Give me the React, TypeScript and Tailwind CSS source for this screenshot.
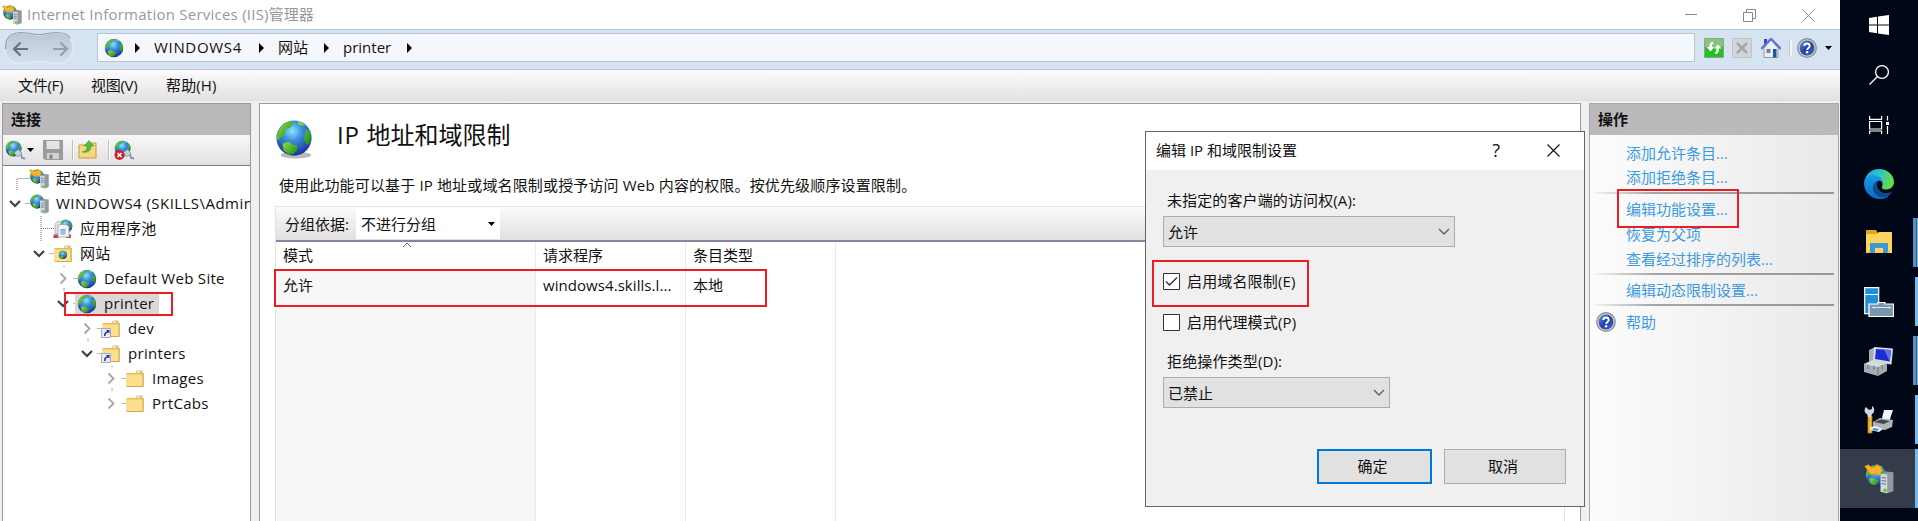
import type { ReactNode } from 'react';

const GlobeShapes = () => (
  <>
    <defs>
      <radialGradient id="sea" cx="45%" cy="30%" r="70%">
        <stop offset="0" stopColor="#8fe3fa" />
        <stop offset="0.4" stopColor="#3a8fdc" />
        <stop offset="1" stopColor="#1c2fa0" />
      </radialGradient>
      <linearGradient id="land" x1="0" y1="0" x2="1" y2="1">
        <stop offset="0" stopColor="#9be03c" />
        <stop offset="1" stopColor="#128a1e" />
      </linearGradient>
    </defs>
    <circle cx="20" cy="20" r="18.5" fill="url(#sea)" />
    <path d="M3 14C6 7 11 3 17 2l2 3-3 4-5 2-1 5-4 4-3 3-1-3z" fill="url(#land)" />
    <path d="M24 2l5 2 3 3-3 0-4-1zM33 11l3 1 2 6-1 7-3 2-3-4 0-6z" fill="url(#land)" />
    <path d="M8 26l6-2 5 3 5 1-1 5-4 4-5 0-5-4z" fill="url(#land)" />
  </>
);

const Globe = ({ className }: { className: string }) => (
  <svg viewBox="0 0 40 40" className={className}>
    <GlobeShapes />
  </svg>
);

const Tower = () => (
  <>
    <path d="M23 13l7-3 9 1v25l-8 3-8-2z" fill="#8d949b" />
    <path d="M31 14l8-3v25l-8 3z" fill="#9299a0" />
    <path d="M22 13l9 1v25l-9-2z" fill="#d3d8db" />
    <path d="M23.500 18l6 1M23.500 22l6 1M23.500 26l6 1" stroke="#6a7279" strokeWidth="1.6" />
    <circle cx="28" cy="35" r="2.400" fill="#4fd21c" />
  </>
);

const ServerGlobe = ({ className, arrow }: { className: string; arrow?: boolean }) => (
  <svg viewBox="0 0 40 40" className={className}>
    <g transform="translate(1 0) scale(.76)">
      <GlobeShapes />
    </g>
    {arrow && (
      <path d="M1 3l5-2 4 4 6-2 1-3 8 8-5 8-4-3-7 1z" fill="#fbb52a" stroke="#d98a10" strokeWidth="1" />
    )}
    <Tower />
  </svg>
);

const Folder = ({ kind }: { kind?: 'web' | 'link' }) => (
  <svg viewBox="0 0 20 20" className="size-5 shrink-0">
    <path d="M1.5 4h9l1.5-2.5h6V17.500h-16.500z" fill="#e9bd5c" />
    <path d="M13 2h4.500v2h-5.500z" fill="#fff5d2" />
    <path d="M14.500 2.500h2.500v1h-3z" fill="#58a6dc" />
    <path d="M1.800 5.500h15.700v11.700H1.800z" fill="#fbdf8b" />
    <path d="M1.800 17.500h16.500V4" fill="none" stroke="#cf9f45" strokeWidth=".9" />
    {kind === 'web' && (
      <g transform="translate(5.500 6.500) scale(.22)">
        <GlobeShapes />
      </g>
    )}
    {kind === 'link' && (
      <>
        <path d="M.5 9.500h9v9h-9z" fill="#e8eaf6" stroke="#a5a8bc" />
        <path d="M3 17c0-3 1-4 3-4.500l-1-1.500h3.500v3.500l-1.300-1C5 14 4.500 15 4.500 17z" fill="#24309a" />
      </>
    )}
  </svg>
);

const AppPool = () => (
  <svg viewBox="0 0 20 20" className="size-5 shrink-0">
    <g transform="translate(5.500 0) scale(.36)">
      <GlobeShapes />
    </g>
    <path d="M2 5l3-3 3 1v12H2z" fill="#dfe2e4" stroke="#a1a6aa" strokeWidth=".7" />
    <path d="M.5 15.500h5V19h-5zM13 15.500h5V19h-5z" fill="#c4463c" />
    <path d="M5 7l1-1.500h7l3 2V18H5z" fill="#f1f4f7" stroke="#929aa2" strokeWidth=".7" />
    <path d="M7.500 10h5v5.500h-5z" fill="#7aa5d0" />
    <path d="M7.500 12h5M7.500 14h5" stroke="#fff" strokeWidth=".6" />
  </svg>
);

const GlobePlug = ({ error }: { error?: boolean }) => (
  <svg viewBox="0 0 20 20" className="size-5 shrink-0">
    <path d="M12 13l4 1 1 4 3 .5" stroke="#7e97a5" strokeWidth="1.800" fill="none" />
    <g transform="scale(.43)">
      <GlobeShapes />
    </g>
    <path d="M9.500 12l4-2.500 3.500 3.500-3 3.500-3.500-1z" fill="#c3d2da" stroke="#718995" strokeWidth=".6" />
    {error && (
      <>
        <circle cx="5.500" cy="15" r="5" fill="#d0222c" />
        <path d="M3.500 13l4 4m0-4l-4 4" stroke="#fff" strokeWidth="1.600" />
      </>
    )}
  </svg>
);

const Help = () => (
  <svg viewBox="0 0 20 20" className="size-5 shrink-0">
    <defs>
      <linearGradient id="hb" x1="0" y1="0" x2="1" y2="1">
        <stop offset="0" stopColor="#6a8fe0" />
        <stop offset=".5" stopColor="#2243a6" />
        <stop offset="1" stopColor="#3c63cc" />
      </linearGradient>
    </defs>
    <circle cx="10" cy="10" r="9.300" fill="#c9c9c9" stroke="#8b8b8b" strokeWidth="1.200" />
    <circle cx="10" cy="10" r="7.400" fill="url(#hb)" />
    <path d="M7.300 8c0-3.300 5.400-3.300 5.400 0 0 1.900-2.600 1.900-2.600 4" fill="none" stroke="#fff" strokeWidth="1.900" />
    <circle cx="10.100" cy="14.200" r="1.200" fill="#fff" />
  </svg>
);

const Right = () => (
  <svg viewBox="0 0 5 10" className="h-2.5 w-[5px] shrink-0">
    <path d="M0 0l5 5-5 5z" fill="#000" />
  </svg>
);

const Down = () => (
  <svg viewBox="0 0 7 4" className="h-1 w-[7px] shrink-0">
    <path d="M0 0h7L3.500 4z" fill="#000" />
  </svg>
);

const ToolSep = () => <div className="h-5 w-0.5 shrink-0 border-l border-[#c5c0a8] bg-white" />;

type Node = {
  depth: number;
  label: string;
  icon: ReactNode;
  state?: 'open' | 'closed';
  line?: string;
  selected?: boolean;
};

const tree: Node[] = [
  { depth: 0, label: '起始页', icon: <ServerGlobe arrow className="size-5 shrink-0" />, line: 'M14.500 26V12.500H28' },
  { depth: 0, label: 'WINDOWS4 (SKILLS\\Admin', icon: <ServerGlobe className="size-5 shrink-0" />, state: 'open', line: 'M23 12.500H28' },
  { depth: 1, label: '应用程序池', icon: <AppPool />, line: 'M14.500 0V25M14.500 12.500H28' },
  { depth: 1, label: '网站', icon: <Folder kind="web" />, state: 'open', line: 'M23 12.500H28' },
  { depth: 2, label: 'Default Web Site', icon: <Globe className="size-5 shrink-0" />, state: 'closed', line: 'M23 12.500H28M13.500 0V2M13.500 22V25' },
  { depth: 2, label: 'printer', icon: <Globe className="size-5 shrink-0" />, state: 'open', line: 'M23 12.500H28', selected: true },
  { depth: 3, label: 'dev', icon: <Folder kind="link" />, state: 'closed', line: 'M23 12.500H28M13.500 0V2M13.500 22V25' },
  { depth: 3, label: 'printers', icon: <Folder kind="link" />, state: 'open', line: 'M23 12.500H28' },
  { depth: 4, label: 'Images', icon: <Folder />, state: 'closed', line: 'M23 12.500H28M13.500 0V2M13.500 22V25' },
  { depth: 4, label: 'PrtCabs', icon: <Folder />, state: 'closed', line: 'M23 12.500H28' },
];

const TreeRow = ({ n }: { n: Node }) => (
  <div className="flex h-[25px] items-center" style={{ paddingLeft: n.depth * 24 }}>
    <svg viewBox="0 0 27 25" className="-mr-px -ml-px h-[25px] w-[28px] shrink-0">
      <path d={n.line} fill="none" stroke="#777" strokeWidth="1" strokeDasharray="1 1" />
      {n.state === 'open' && <path d="M7.500 10l5 5 5-5" fill="none" stroke="#404040" strokeWidth="2.200" />}
      {n.state === 'closed' && <path d="M10 7.500l5 5-5 5" fill="none" stroke="#a6a6a6" strokeWidth="1.800" />}
    </svg>
    <div className={n.selected ? '-ml-0.5 flex h-[22px] items-center bg-[#d9d9d9] pr-[5px] pl-0.5' : 'flex items-center'}>
      {n.icon}
      <span className={n.depth === 0 && n.state ? 'pb-px pl-[7px] tracking-[0.030em]' : 'pb-px pl-[7px] tracking-[0.020em]'}>{n.label}</span>
    </div>
  </div>
);

const Chevron = () => (
  <svg viewBox="0 0 12 8" className="h-2 w-3">
    <path d="M1 1l5 5 5-5" fill="none" stroke="#606060" strokeWidth="1.400" />
  </svg>
);

const ActionSep = () => <div className="mr-1 ml-1 h-0.5 shrink-0 bg-linear-to-r from-[#f4f4f4] via-[#a5a5a5] via-25% to-[#979797]" />;

const Action = ({ children, h = 'h-[25px]' }: { children: ReactNode; h?: string }) => (
  <div className={'flex shrink-0 items-center pl-9 text-[#3d9bdb] ' + h}>{children}</div>
);

const TaskItem = ({ children, bar, active }: { children: ReactNode; bar?: 'one' | 'two'; active?: boolean }) => (
  <div className={'relative flex h-[59px] shrink-0 items-center justify-center ' + (active ? 'bg-[#343b49]' : '')}>
    {children}
    {bar === 'one' && <div className={'absolute right-0 w-[3px] bg-[#76b9ed] ' + (active ? 'inset-y-0' : 'inset-y-[5px]')} />}
    {bar === 'two' && (
      <div className="absolute inset-y-[5px] right-0 w-[5px] border-r border-[#76b9ed] bg-[#5b92bd]">
        <div className="ml-[3px] h-full w-px bg-[#38607f]" />
      </div>
    )}
  </div>
);

const red = 'pointer-events-none absolute border-2 border-[#ed1c24] ';

export default function App() {
  return (
    <div className="relative flex h-[521px] w-[1918px] overflow-hidden bg-[#f0f0f0] font-['Open_Sans','Noto_Sans_CJK_SC',sans-serif] text-[15px] leading-5 whitespace-nowrap text-[#111]">
      <div className="flex w-[1840px] shrink-0 flex-col">
        <header className="flex h-[29px] shrink-0 items-center bg-white pl-0.5 text-[#999]">
          <ServerGlobe arrow className="size-5" />
          <span className="pb-px pl-[5px]">
            <span className="tracking-[0.016em]">Internet Information Services (IIS)</span>管理器
          </span>
          <svg viewBox="0 0 130 14" className="mr-[25px] ml-auto h-3.5 w-[130px]" fill="none" stroke="#888">
            <path d="M0 6.500h12M58.500 4.500h9v9h-9zM61.500 4.500v-3h9v9h-3M117.500 1.500l12 12m0-12l-12 12" />
          </svg>
        </header>

        <div className="flex h-[41px] shrink-0 items-center border-y border-[#b7c6d5] bg-[#d6e4f1]">
          <svg viewBox="0 0 74 38" className="mr-[23px] h-[38px] w-[74px] shrink-0">
            <defs>
              <linearGradient id="nav" x1="0" y1="0" x2="0" y2="1">
                <stop offset="0" stopColor="#b8c6d6" />
                <stop offset="1" stopColor="#d3e0ee" />
              </linearGradient>
            </defs>
            <path d="M20 1.500C30 1.500 31 4 39 4s9-2.500 18-2.500c21 0 21 31 0 31-9 0-10-2-18-2s-9 2-19 2c-20 0-20-31 0-31z" fill="url(#nav)" stroke="#e0eaf4" strokeWidth="1.500" />
            <path d="M5.500 18C5 7 11 2 20 1.500 30 1.500 31 3.500 39 3.500s9-2 18-2c6 0 11 2 13 6" fill="none" stroke="#98a2ad" strokeWidth="1.200" />
            <path d="M28 18H14m6.500-6.500L14 18l6.500 6.500" fill="none" stroke="#707070" strokeWidth="2.200" />
            <path d="M53 18h14m-6.500-6.500L67 18l-6.500 6.500" fill="none" stroke="#9a9fa5" strokeWidth="2.200" />
          </svg>
          <div className="mb-1 flex h-[29px] w-[1598px] shrink-0 items-center border border-[#b5c5d6] bg-[#f4f8fd] pl-[7px]">
            <Globe className="-ml-px size-5" />
            <div className="flex items-center pl-[11px]">
              <Right />
              <span className="w-[119px] pb-px pl-3.5 tracking-[0.045em]">WINDOWS4</span>
              <Right />
              <span className="w-[60px] pb-px pl-3.5">网站</span>
              <Right />
              <span className="w-[78px] pb-px pl-3.5">printer</span>
              <Right />
            </div>
          </div>
          <div className="mb-1 ml-[9px] flex items-center">
            <svg viewBox="0 0 20 20" className="mr-2 size-5">
              <path d="M.5.500h19v19H.5z" fill="#25c021" stroke="#8da58d" />
              <path d="M1 1h18v8H1z" fill="#86c57e" />
              <path d="M9 4C6 4 5.500 6 5.500 9H2.500l4 4.500L10.500 9H8c0-2 0-3 1.500-3.500zM11 16c3 0 4-2 4-5.500h2.500L14 6.500 10 10.500h2.500c0 2 0 3-1.500 3.500z" fill="#fff" />
            </svg>
            <svg viewBox="0 0 20 20" className="mr-[9px] size-5">
              <path d="M.5.500h19v19H.5z" fill="#d3d6d9" stroke="#bcc3ca" />
              <path d="M5 5l10 10m0-10L5 15" stroke="#a5a9ad" strokeWidth="2.600" />
            </svg>
            <svg viewBox="0 0 20 20" className="mr-[9px] size-5">
              <path d="M3 1h3v6H3z" fill="#3d47c4" />
              <path d="M3 10l7-8 7 8v9.500H3z" fill="#eceff4" stroke="#8e97ad" />
              <path d="M0 11L10 .8 20 11" fill="none" stroke="#6270cd" strokeWidth="2.200" />
              <path d="M5.500 11h4v4h-4z" fill="#777f8d" />
              <path d="M12 11h3.500v8.500H12z" fill="#155a9e" />
            </svg>
            <div className="mr-[5px] h-4 w-0.5 bg-[#f4f4f4] shadow-[-1px_0_0_#c6c9cc]" />
            <Help />
            <div className="pl-2">
              <Down />
            </div>
          </div>
        </div>

        <nav className="flex h-[31px] shrink-0 items-center gap-[25px] border-b border-[#dedcdd] bg-linear-to-b from-[#fcfcfc] to-[#e4e1e2] pl-[18px]">
          <span className="w-12 tracking-[-0.020em]">文件(F)</span>
          <span className="w-[50px] tracking-[-0.020em]">视图(V)</span>
          <span className="tracking-[0.010em]">帮助(H)</span>
        </nav>

        <main className="flex min-h-0 grow pt-0.5 pl-0.5">
          <aside className="flex w-[249px] shrink-0 flex-col overflow-hidden border-x border-t border-[#9a9a9a] bg-white">
            <div className="flex h-[31px] shrink-0 items-center bg-[#bbb9bb] pb-px pl-2 font-bold">连接</div>
            <div className="flex h-[31px] shrink-0 items-center border-b border-[#7b7b9b] bg-linear-to-b from-[#f9f8f9] to-[#e1dfe0] pl-0.5">
              <GlobePlug />
              <div className="pr-[9px] pl-0.5">
                <Down />
              </div>
              <svg viewBox="0 0 20 20" className="mr-[9px] size-5 shrink-0">
                <path d="M0 0h20v20H2l-2-2z" fill="#9b9b9b" />
                <path d="M3.500 1h13v8h-13z" fill="#e3e3e3" />
                <path d="M4 13h12v6H4z" fill="#d2d2d2" />
                <path d="M6.500 14.500h3V19h-3z" fill="#888" />
              </svg>
              <ToolSep />
              <svg viewBox="0 0 20 20" className="mx-1 size-5 shrink-0">
                <path d="M1 5h10l1-2h6v15H1z" fill="#f7d680" stroke="#c79a3f" />
                <path d="M4 12c5-1 5-4 5-6H6l5-5.500L16 6h-3c0 5-3 7-9 6z" fill="#4fbf3a" stroke="#2d9426" strokeWidth=".5" />
              </svg>
              <div className="pr-1 pl-1.5">
                <ToolSep />
              </div>
              <GlobePlug error />
            </div>
            <div className="flex flex-col">
              {tree.map((n) => (
                <TreeRow key={n.label} n={n} />
              ))}
            </div>
          </aside>

          <section className="ml-2 flex w-[1322px] shrink-0 flex-col border-x border-t border-[#9a9a9a] bg-white pl-[15px]">
            <div className="flex h-[67px] shrink-0 items-center pt-1.5">
              <svg viewBox="0 0 40 42" className="mb-1 h-10 w-[38px]">
                <ellipse cx="22" cy="38" rx="16" ry="3.500" fill="#b9b9b9" />
                <GlobeShapes />
              </svg>
              <h1 className="mb-[11px] pl-6 text-[24px] leading-8">
                <span className="tracking-[0.030em]">IP </span>地址和域限制
              </h1>
            </div>
            <p className="h-[35px] shrink-0 pt-1 pl-1 tracking-[0.010em]">
              使用此功能可以基于 IP 地址或域名限制或授予访问 Web 内容的权限。按优先级顺序设置限制。
            </p>
            <div className="mr-[15px] flex min-h-0 grow flex-col border-x border-t border-[#e3e3e3]">
              <div className="flex h-[35px] shrink-0 items-center border-b-2 border-[#8585a4] bg-linear-to-b from-[#fbfafb] to-[#e1dfe0] pl-[9px]">
                <span className="w-[71px]">分组依据:</span>
                <div className="flex h-[31px] w-36 items-center justify-between bg-white pr-[5px] pl-[5px]">
                  <span>不进行分组</span>
                  <Down />
                </div>
              </div>
              <div className="grid min-h-0 grow grid-cols-[260px_150px_150px_1fr]">
                <div className="relative flex flex-col border-r border-[#e1eefa]">
                  <svg viewBox="0 0 10 6" className="absolute top-0 left-[126px] h-1.5 w-2.5">
                    <path d="M1 5l4-4 4 4" fill="none" stroke="#666" />
                  </svg>
                  <div className="flex h-[27px] shrink-0 items-center pb-0.5 pl-[7px]">模式</div>
                  <div className="grow bg-[#f7f7f7] pt-1.5 pl-[7px]">允许</div>
                </div>
                <div className="border-r border-[#e1eefa] pl-[7px]">
                  <div className="flex h-[27px] items-center pb-0.5">请求程序</div>
                  <div className="pt-1.5 tracking-[0.004em]">windows4.skills.l...</div>
                </div>
                <div className="border-r border-[#e1eefa] pl-[7px]">
                  <div className="flex h-[27px] items-center pb-0.5">条目类型</div>
                  <div className="pt-1.5">本地</div>
                </div>
              </div>
            </div>
          </section>

          <aside className="ml-2 flex w-[250px] shrink-0 flex-col border-x border-t border-[#a8a8a8] bg-linear-to-r from-[#fcfcfc] to-[#e9e9e9]">
            <div className="flex h-[31px] shrink-0 items-center bg-[#bbb9bb] pb-px pl-2 font-bold">操作</div>
            <div className="h-[5px] shrink-0" />
            <Action>添加允许条目...</Action>
            <Action h="h-[27px] pb-[3px]">添加拒绝条目...</Action>
            <ActionSep />
            <Action h="h-[29px]">编辑功能设置...</Action>
            <Action h="h-[24px] pb-0.5">恢复为父项</Action>
            <Action h="h-[26px] pb-0.5">查看经过排序的列表...</Action>
            <ActionSep />
            <Action h="h-[29px]">编辑动态限制设置...</Action>
            <ActionSep />
            <div className="flex h-[30px] items-center gap-2.5 pt-px pl-1.5 text-[#3d9bdb]">
              <Help />
              帮助
            </div>
          </aside>
        </main>
      </div>

      <div className="flex w-[78px] shrink-0 flex-col bg-[#000818]">
        <div className="flex h-[50px] shrink-0 items-center justify-center">
          <svg viewBox="0 0 20 20" className="size-5" fill="#fff">
            <path d="M0 3l8-1.200v7.700H0zM9 1.600L20 0v9.500H9zM0 10.500h8v7.700L0 17zM9 10.500h11V20L9 18.400z" />
          </svg>
        </div>
        <div className="flex h-[50px] shrink-0 items-center justify-center">
          <svg viewBox="0 0 20 20" className="size-5" fill="none" stroke="#fff" strokeWidth="1.300">
            <circle cx="13" cy="7" r="6.400" />
            <path d="M8.500 11.500L.5 19.500" />
          </svg>
        </div>
        <div className="flex h-[49px] shrink-0 items-center justify-center">
          <svg viewBox="0 0 20 20" className="size-5" fill="none" stroke="#fff" strokeWidth="1.200">
            <path d="M.6 1v3.400h12V1M.6 19v-3h12v3M.6 6.500h12v7.500H.6zM18.500 1v4.500M18.500 11v8" />
            <path d="M17 7h3v3h-3z" fill="#fff" stroke="none" />
          </svg>
        </div>
        <div className="h-[5px] shrink-0" />
        <TaskItem>
          <svg viewBox="0 0 30 30" className="size-[30px]">
            <defs>
              <linearGradient id="e1" x1="0" y1="0" x2="1" y2=".3">
                <stop offset="0" stopColor="#1aa0e0" />
                <stop offset=".5" stopColor="#2bc3d2" />
                <stop offset="1" stopColor="#63dc4a" />
              </linearGradient>
              <linearGradient id="e2" x1="0" y1="0" x2="0" y2="1">
                <stop offset="0" stopColor="#1b9de2" />
                <stop offset="1" stopColor="#0a66c8" />
              </linearGradient>
            </defs>
            <path d="M.3 12.500C2 4.500 8 0 15 0c8.500 0 15 6 15 13 0 4.500-3.500 7.500-7.500 7.500-4 0-5.500-1.500-4.500-3 1.500-3 0-6.500-4.500-7C8 9.500 3 12 .3 12.500z" fill="url(#e1)" />
            <path d="M.2 13C1 8.500 5 6 9.500 6c5 0 9 3.500 9 7.500 0-1.500-4-3-6.500 0-3 4-.5 11 5 13 3 1.200 6 .7 8.500-.7C22 31 14 31 9 28.500 2.500 25-.5 19 .2 13z" fill="url(#e2)" />
            <path d="M12 12.500c-3 2-4.500 7-1.500 11.500 4 5.500 11.500 5.500 16.500.5l1-1.700c-4.500 2-9.500 1.700-12.500-1.300-2.500-2.500-3-5.500-2-8.500z" fill="#114a8b" />
          </svg>
        </TaskItem>
        <TaskItem bar="two">
          <svg viewBox="0 0 28 24" className="mb-px h-6 w-7">
            <path d="M1 0h10l2 3h14v20H1z" fill="#e8a317" />
            <path d="M1 4h11l2-2h13v21H1z" fill="#ffd55e" />
            <path d="M5 13h18v10h-5v-5h-8v5H5z" fill="#3a96dd" />
            <path d="M3 22h3M22 22h3" stroke="#f1b32b" />
          </svg>
        </TaskItem>
        <TaskItem bar="one">
          <svg viewBox="0 0 30 30" className="size-[30px]">
            <path d="M.7.700h14v26H.7z" fill="#1f8fda" stroke="#fff" strokeWidth="1.200" />
            <path d="M0 7.500h15" stroke="#fff" />
            <path d="M14 17v-1.500h7V17h8.500v12.500H5V17z" fill="#7896ac" stroke="#fff" strokeWidth="1.200" />
            <path d="M8 20.500h19M10 19.500v2M25 19.500v2" stroke="#dfe8ee" />
          </svg>
        </TaskItem>
        <TaskItem bar="two">
          <svg viewBox="0 0 30 30" className="size-[30px]">
            <path d="M5 4l6-3v16l-6 2z" fill="#a9acaf" />
            <path d="M10 1l19 1.500-1.500 16L9 16z" fill="#d9dce0" />
            <path d="M12 3l15 1-1.200 11.500L11 13z" fill="#1a2cd2" />
            <path d="M20 3.500l7 .5-1.200 11.500z" fill="#5b72ea" />
            <path d="M0 18l9-4 14 3v8l-9 5L0 26z" fill="#a3adb4" />
            <path d="M0 18l9-4 14 3-9 4z" fill="#d4dade" />
            <path d="M14 21v8.500M4 19v4M10 20v4M18 19v4" stroke="#687279" />
          </svg>
        </TaskItem>
        <TaskItem bar="one">
          <svg viewBox="0 0 30 30" className="size-[30px]">
            <path d="M4 11h4v17H4z" fill="#f5b52c" stroke="#b97b0c" strokeWidth=".8" />
            <path d="M2 2l3 3 3-1 0-3c3 2 3 6 0 8l-1 3H4L3 9C0 8 0 4 2 2z" fill="#d3d7da" />
            <path d="M18 13l2-8h9l-4 12h-8z" fill="#f2f4f6" />
            <path d="M9 17l7-4 13 2-1 7-7 3-12-3z" fill="#aeb5ba" />
            <path d="M10 17l7-2.500 9 1.500-6 3z" fill="#3f464d" />
            <path d="M6 22l6-1 7 3-4 3-9-2z" fill="#dff0f9" />
            <path d="M9 23l6 1-2 2-4-1z" fill="#3f93c4" />
          </svg>
        </TaskItem>
        <TaskItem bar="one" active>
          <ServerGlobe arrow className="size-[30px]" />
        </TaskItem>
      </div>

      <div role="dialog" className="absolute top-[131px] left-[1145px] flex h-[376px] w-[440px] flex-col border border-[#646464] bg-[#f0f0f0]">
        <div className="flex h-[38px] shrink-0 items-center bg-white pl-2.5">
          <span className="pb-0.5">编辑 IP 和域限制设置</span>
          <span className="mr-[47px] ml-auto pb-0.5 text-[18px]">?</span>
          <svg viewBox="0 0 13 13" className="mr-6 mb-px size-[13px]">
            <path d="M.5.500l12 12m0-12l-12 12" stroke="#111" strokeWidth="1.100" />
          </svg>
        </div>
        <div className="flex flex-col pt-5 pl-[17px]">
          <span className="pl-1 tracking-[0.008em]">未指定的客户端的访问权(A):</span>
          <div className="mt-1.5 flex h-[31px] w-[292px] items-center justify-between border border-[#adadad] bg-[#e1e1e1] pr-1 pl-1">
            允许
            <Chevron />
          </div>
          <div className="mt-6 flex h-5 items-center gap-[7px]">
            <svg viewBox="0 0 17 17" className="size-[17px]">
              <path d="M.5.500h16v16H.5z" fill="#fff" stroke="#333" />
              <path d="M3 8.500l3.500 3.500L14 4.500" fill="none" stroke="#333" strokeWidth="1.400" />
            </svg>
            <span className="tracking-[0.010em]">启用域名限制(E)</span>
          </div>
          <div className="mt-[21px] flex h-5 items-center gap-[7px]">
            <svg viewBox="0 0 17 17" className="size-[17px]">
              <path d="M.5.500h16v16H.5z" fill="#fff" stroke="#333" />
            </svg>
            <span className="tracking-[0.010em]">启用代理模式(P)</span>
          </div>
          <span className="mt-[19px] pl-1 tracking-[0.010em]">拒绝操作类型(D):</span>
          <div className="mt-1.5 flex h-[31px] w-[227px] items-center justify-between border border-[#adadad] bg-[#e1e1e1] pr-1 pl-1">
            已禁止
            <Chevron />
          </div>
        </div>
        <div className="mt-[41px] flex gap-3 pl-[171px]">
          <div className="flex h-[35px] w-[115px] items-center justify-center border-2 border-[#0078d7] bg-[#e1e1e1] pr-1 pb-px">确定</div>
          <div className="flex h-[35px] w-[122px] items-center justify-center border border-[#adadad] bg-[#e1e1e1] pr-1 pb-0.5">取消</div>
        </div>
      </div>

      <div className={red + 'top-[292px] left-[64px] h-6 w-[109px]'} />
      <div className={red + 'top-[269px] left-[274px] h-[38px] w-[493px]'} />
      <div className={red + 'top-[260px] left-[1152px] h-[47px] w-[157px]'} />
      <div className={red + 'top-[189px] left-[1617px] h-[39px] w-[122px]'} />
    </div>
  );
}
